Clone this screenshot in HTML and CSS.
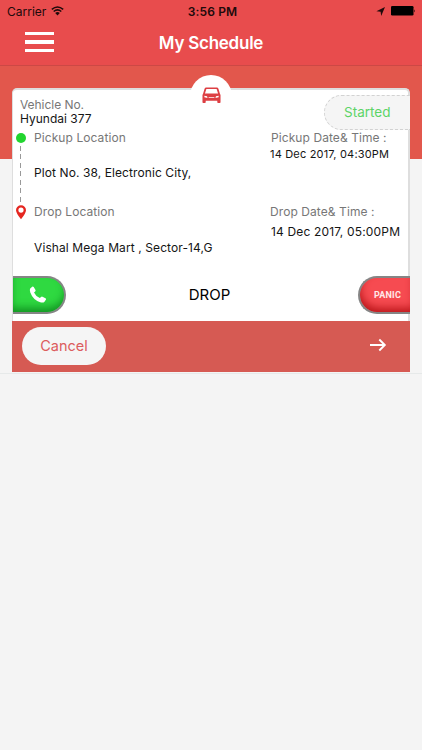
FILE: index.html
```html
<!DOCTYPE html>
<html lang="en">
<head>
<meta charset="utf-8">
<title>My Schedule</title>
<link rel="stylesheet" href="styles.css">
</head>
<body>
<header class="header">
  <div class="status">
    <div class="carrier"><span>Carrier</span>
      <svg width="13" height="10" viewBox="0 0 13 10"><path d="M.8 3.4Q6.5-1.5 12.2 3.4M2.7 5.5Q6.5 2.2 10.3 5.5" fill="none" stroke="#200a0b" stroke-width="1.5"/><path d="M4.2 7Q6.5 5 8.8 7L6.5 9.4Z" fill="#200a0b"/></svg>
    </div>
    <span class="clock">3:56 PM</span>
    <div class="indicators">
      <svg width="9" height="9" viewBox="0 0 9 9"><path d="M9 0 5.200 9 4.600 4.800.4 4.200Z" fill="#200a0b"/></svg>
      <svg width="25" height="10" viewBox="0 0 25 10"><rect width="22.5" height="9.6" rx="1.3"/><path d="M23.2 3.2q1.5 1.6 0 3.4z"/></svg>
    </div>
  </div>
  <div class="nav">
    <div class="menu"><i></i><i></i><i></i></div>
    <h1 class="title">My Schedule</h1>
    <span></span>
  </div>
</header>
<main class="main">
  <section class="card">
    <div class="car">
      <svg width="19" height="16" viewBox="0 0 20 17" preserveAspectRatio="none"><path fill="#dd3f43" fill-rule="evenodd" d="M4.400.6h11.200q1.300 0 1.700 1.200L18.800 7l.7 1.400v7.800q0 .8-.8.8h-1.800q-.8 0-.8-.8v-1.600H3.900v1.600q0 .8-.8.8H1.300q-.8 0-.8-.8V8.400L1.200 7l1.500-5.200Q3.100.6 4.400.6ZM4.600 2 3.100 7h13.800L15.400 2ZM2.500 9.200v1.700l3.300.7-.5-1.800ZM17.500 9.200v1.700l-3.300.7.5-1.800ZM7 10.500v1h6v-1Z"/></svg>
    </div>
    <div class="started"><span>Started</span></div>
    <div class="body">
      <div class="vehicle">
        <div class="label vehicle-label"><span>Vehicle No.</span></div>
        <div class="vehicle-name"><span>Hyundai 377</span></div>
      </div>
      <div class="trip">
        <div class="rail">
          <div class="dot"></div>
          <div class="dash"></div>
          <svg width="12" height="15" viewBox="0 0 12 15"><path fill="#e52620" fill-rule="evenodd" d="M6 .2a5 5 0 0 1 5 5Q11 8 6 14.300 1 8 1 5.200a5 5 0 0 1 5-5ZM6 2.500a2.600 2.600 0 1 0 0 5.200 2.600 2.600 0 0 0 0-5.200Z"/></svg>
        </div>
        <div class="places">
          <div class="label pickup"><span>Pickup Location</span></div>
          <div class="plot"><span>Plot No. 38, Electronic City,</span></div>
          <div class="label drop"><span>Drop Location</span></div>
          <div class="mart"><span>Vishal Mega Mart , Sector-14,G</span></div>
        </div>
        <div class="times">
          <div class="label pickup-time"><span>Pickup Date&amp; Time :</span></div>
          <div class="pickup-date"><span>14 Dec 2017, 04:30PM</span></div>
          <div class="label drop-time"><span>Drop Date&amp; Time :</span></div>
          <div class="drop-date"><span>14 Dec 2017, 05:00PM</span></div>
        </div>
      </div>
    </div>
    <div class="actions">
      <div class="pill call">
        <svg width="18" height="18" viewBox="0 0 18 18"><path fill="#fff" d="M1.200 2.500 3.200.7q.9-.5 1.500.4L6.500 4q.4.800-.3 1.400L5 6.500q1.700 3.800 5.800 5.600l1.300-1.200q.6-.5 1.400-.1l3 1.400q1 .6.500 1.400l-1.500 2.100q-1.300 1.400-4.300.5Q4.100 14 1.300 6.500.4 3.700 1.200 2.500Z"/></svg>
      </div>
      <span class="kind">DROP</span>
      <div class="pill panic"><span>PANIC</span></div>
    </div>
    <footer class="footer">
      <div class="cancel"><span>Cancel</span></div>
      <svg width="18" height="14" viewBox="0 0 18 14"><path d="M1 7h14.500M10.300 1.500 15.800 7l-5.500 5.500" fill="none" stroke="#fff" stroke-width="1.900"/></svg>
    </footer>
  </section>
</main>
</body>
</html>
```
FILE: styles.css
```css
* { box-sizing: border-box; }
body {
  margin: 0;
  height: 750px;
  overflow: hidden;
  background: #f4f4f4;
  font-family: Inter, "Liberation Sans", sans-serif;
  color: #151515;
  white-space: nowrap;
}
svg { display: block; flex: none; }

.header { height: 66px; background: #e84c4d; border-bottom: 1px solid #cc4845; }
.status {
  display: grid;
  grid-template-columns: 1fr auto 1fr;
  align-items: center;
  height: 22px;
  padding: 0 6px 0 7px;
  font-size: 12px;
  color: #200a0b;
}
.carrier { display: flex; align-items: center; gap: 5px; letter-spacing: 0; }
.clock { margin-left: 2px; font-weight: 600; letter-spacing: .15px; }
.indicators { display: flex; align-items: center; justify-content: flex-end; gap: 6px; }
.nav {
  display: grid;
  grid-template-columns: 1fr auto 1fr;
  align-items: center;
  height: 43px;
  padding: 0 25px;
}
.menu { display: flex; flex-direction: column; gap: 5px; width: 29px; margin-top: -3px; }
.menu i { height: 3.300px; background: #fff; }
.title { margin: -1px 0 0; color: #fff; font-size: 17px; font-weight: 600; line-height: 20px; letter-spacing: -.25px; }

.main {
  height: 308px;
  padding: 22px 12px 0;
  background: linear-gradient(#e2574c 93px, #f4f4f4 93px);
  border-bottom: 1px solid #e6e9e9;
}
.card { position: relative; width: 398px; height: 284px; }
.body {
  height: 182px;
  padding-top: 6px;
  background: #fff;
  border: solid #dedede;
  border-width: 2px 2px 0 1px;
  border-radius: 5px 5px 0 0;
}
.car {
  position: absolute;
  left: 178px;
  top: -13px;
  display: flex;
  justify-content: center;
  width: 42px;
  height: 42px;
  padding-top: 12px;
  border-radius: 50%;
  background: #fff;
}
.started {
  position: absolute;
  right: 0;
  top: 7px;
  width: 86px;
  height: 35px;
  padding-left: 19px;
  border: 1px dashed #d2d2d2;
  border-right: 0;
  border-radius: 18px 0 0 18px;
  background: #f5f5f5;
  color: #5cd467;
  font-size: 13.500px;
  line-height: 33px;
}
.label { color: #777; font-size: 12px; letter-spacing: .08px; }
.vehicle { padding-left: 7px; }
.vehicle-label { padding-top: 1px; line-height: 15px; letter-spacing: -.05px; }
.vehicle-name { line-height: 14px; font-size: 12px; }
.trip { display: grid; grid-template-columns: 21px 236px 1fr; }
.rail { display: flex; flex-direction: column; align-items: center; width: 12px; margin-left: 2px; padding-top: 7px; }
.dot { width: 10px; height: 10px; border-radius: 50%; background: #22d52f; }
.dash {
  width: 1px;
  height: 58px;
  margin: 3px 1px 1px 0;
  background: repeating-linear-gradient(#999 0 5px, transparent 5px 8.500px);
}
.pickup, .pickup-time { line-height: 24px; }
.plot { line-height: 46px; font-size: 12px; letter-spacing: .09px; }
.drop { padding-top: 1px; line-height: 29px; }
.mart { line-height: 44px; font-size: 12px; letter-spacing: .1px; }
.pickup-time { padding-left: 1px; }
.pickup-date { line-height: 8px; font-size: 11px; letter-spacing: .18px; }
.drop-time { margin-top: 41px; line-height: 26px; }
.drop-date { padding-left: 1px; line-height: 13px; font-size: 12px; letter-spacing: .17px; }

.actions {
  display: grid;
  grid-template-columns: 54px 1fr 53px;
  align-items: center;
  height: 51px;
  padding-bottom: 2px;
  background: #fff;
  border-right: 2px solid #dedede;
  border-left: 1px solid #dedede;
}
.kind { margin-left: -3px; text-align: center; color: #000; font-size: 15px; }
.pill { display: flex; align-items: center; height: 38px; border: 2px solid #858585; }
.call {
  width: 53px;
  padding-left: 16px;
  border-left: 0;
  border-radius: 0 19px 19px 0;
  background: #2fd941;
  box-shadow: inset 0 -6px 8px -2px #119222;
}
.panic {
  width: 52px;
  margin-left: 3px;
  padding-left: 14px;
  border-right: 0;
  border-radius: 19px 0 0 19px;
  background: #f64b51;
  box-shadow: inset 2px -6px 8px -2px #bb171b;
  color: #ffe9e9;
  font: 700 9px Roboto, sans-serif;
  letter-spacing: .2px;
}
.footer {
  display: flex;
  align-items: center;
  justify-content: space-between;
  height: 51px;
  padding: 0 23px 1px 10px;
  background: #d65a53;
}
.cancel {
  width: 84px;
  height: 38px;
  border-radius: 19px;
  background: #f5f5f5;
  color: #dc5c5d;
  font-size: 14.500px;
  line-height: 38px;
  text-align: center;
}
.footer svg { margin-top: -3px; }
```
